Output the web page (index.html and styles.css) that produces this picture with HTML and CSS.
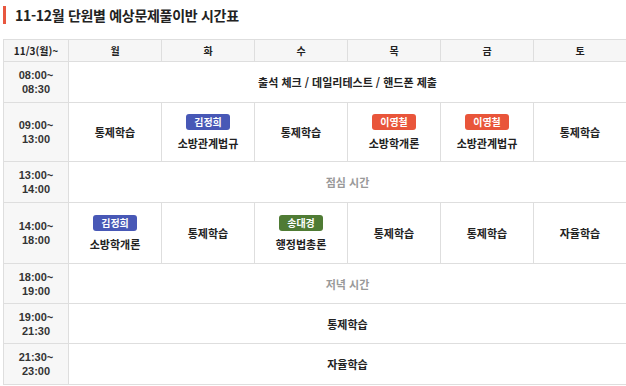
FILE: index.html
```html
<!DOCTYPE html>
<html lang="ko">
<head>
<meta charset="utf-8">
<link rel="stylesheet" href="styles.css">
</head>
<body>
<div class="page">
  <h1 class="title">11-12월 단원별 예상문제풀이반 시간표</h1>
  <table class="tt">
    <colgroup>
      <col class="c-time"><col class="c-day"><col class="c-day"><col class="c-day"><col class="c-day"><col class="c-day"><col class="c-day">
    </colgroup>
    <thead>
      <tr class="r-head">
        <th>11/3(월)~</th><th>월</th><th>화</th><th>수</th><th>목</th><th>금</th><th>토</th>
      </tr>
    </thead>
    <tbody>
      <tr class="r-s1">
        <th class="time"><span class="tl">08:00~</span><span class="tl">08:30</span></th>
        <td colspan="6">출석 체크 / 데일리테스트 / 핸드폰 제출</td>
      </tr>
      <tr class="r-l1">
        <th class="time"><span class="tl">09:00~</span><span class="tl">13:00</span></th>
        <td>통제학습</td>
        <td><span class="badge blue">김정희</span><span class="subj">소방관계법규</span></td>
        <td>통제학습</td>
        <td><span class="badge red">이영철</span><span class="subj">소방학개론</span></td>
        <td><span class="badge red">이영철</span><span class="subj">소방관계법규</span></td>
        <td>통제학습</td>
      </tr>
      <tr class="r-s2">
        <th class="time"><span class="tl">13:00~</span><span class="tl">14:00</span></th>
        <td colspan="6" class="muted">점심 시간</td>
      </tr>
      <tr class="r-l2">
        <th class="time"><span class="tl">14:00~</span><span class="tl">18:00</span></th>
        <td><span class="badge blue">김정희</span><span class="subj">소방학개론</span></td>
        <td>통제학습</td>
        <td><span class="badge green">송대경</span><span class="subj">행정법총론</span></td>
        <td>통제학습</td>
        <td>통제학습</td>
        <td>자율학습</td>
      </tr>
      <tr class="r-s3">
        <th class="time"><span class="tl">18:00~</span><span class="tl">19:00</span></th>
        <td colspan="6" class="muted">저녁 시간</td>
      </tr>
      <tr class="r-s3">
        <th class="time"><span class="tl">19:00~</span><span class="tl">21:30</span></th>
        <td colspan="6">통제학습</td>
      </tr>
      <tr class="r-s4">
        <th class="time"><span class="tl">21:30~</span><span class="tl">23:00</span></th>
        <td colspan="6">자율학습</td>
      </tr>
    </tbody>
  </table>
</div>
</body>
</html>
```

FILE: styles.css
```css
html, body {
  margin: 0;
  padding: 0;
  background: #fff;
}
body {
  font-family: "Noto Sans CJK KR", "Noto Sans", sans-serif;
  color: #222;
}
.page {
  padding: 6px 1px 0 3px;
}
.title {
  margin: 0 0 15px 0;
  height: 18px;
  line-height: 18px;
  border-left: 3px solid #e8573f;
  padding-left: 9px;
  font-size: 14px;
  font-weight: 700;
  color: #222;
  letter-spacing: -0.3px;
}
.tt {
  border-collapse: collapse;
  width: 622px;
  table-layout: fixed;
}
.c-time { width: 65px; }
.c-day { width: 93px; }
.tt th, .tt td {
  border: 1px solid #dedede;
  text-align: center;
  vertical-align: middle;
  font-size: 11px;
  font-weight: 700;
  color: #222;
  padding: 0;
  line-height: 14px;
}
.r-head th {
  background: #f6f6f6;
  height: 21px;
  font-size: 10px;
}
.time {
  background: #f7f7f7;
}
.tl {
  display: block;
  font-family: "Liberation Sans", "Noto Sans", sans-serif;
  font-size: 11px;
  line-height: 14px;
  height: 14px;
  color: #333;
}
.r-s1 > * { height: 40px; }
.r-l1 > * { height: 58px; }
.r-s2 > * { height: 40px; }
.r-l2 > * { height: 60px; }
.r-s3 > * { height: 39px; }
.r-s4 > * { height: 40px; }
.muted {
  color: #999 !important;
}
.badge {
  display: block;
  width: 44px;
  height: 16px;
  line-height: 16px;
  margin: 0 auto 6px;
  border-radius: 3px;
  color: #fff;
  font-size: 10px;
  font-weight: 700;
}
.blue { background: #4858b6; }
.red { background: #e9553a; }
.green { background: #4f7b34; }
.subj {
  display: block;
}
```
